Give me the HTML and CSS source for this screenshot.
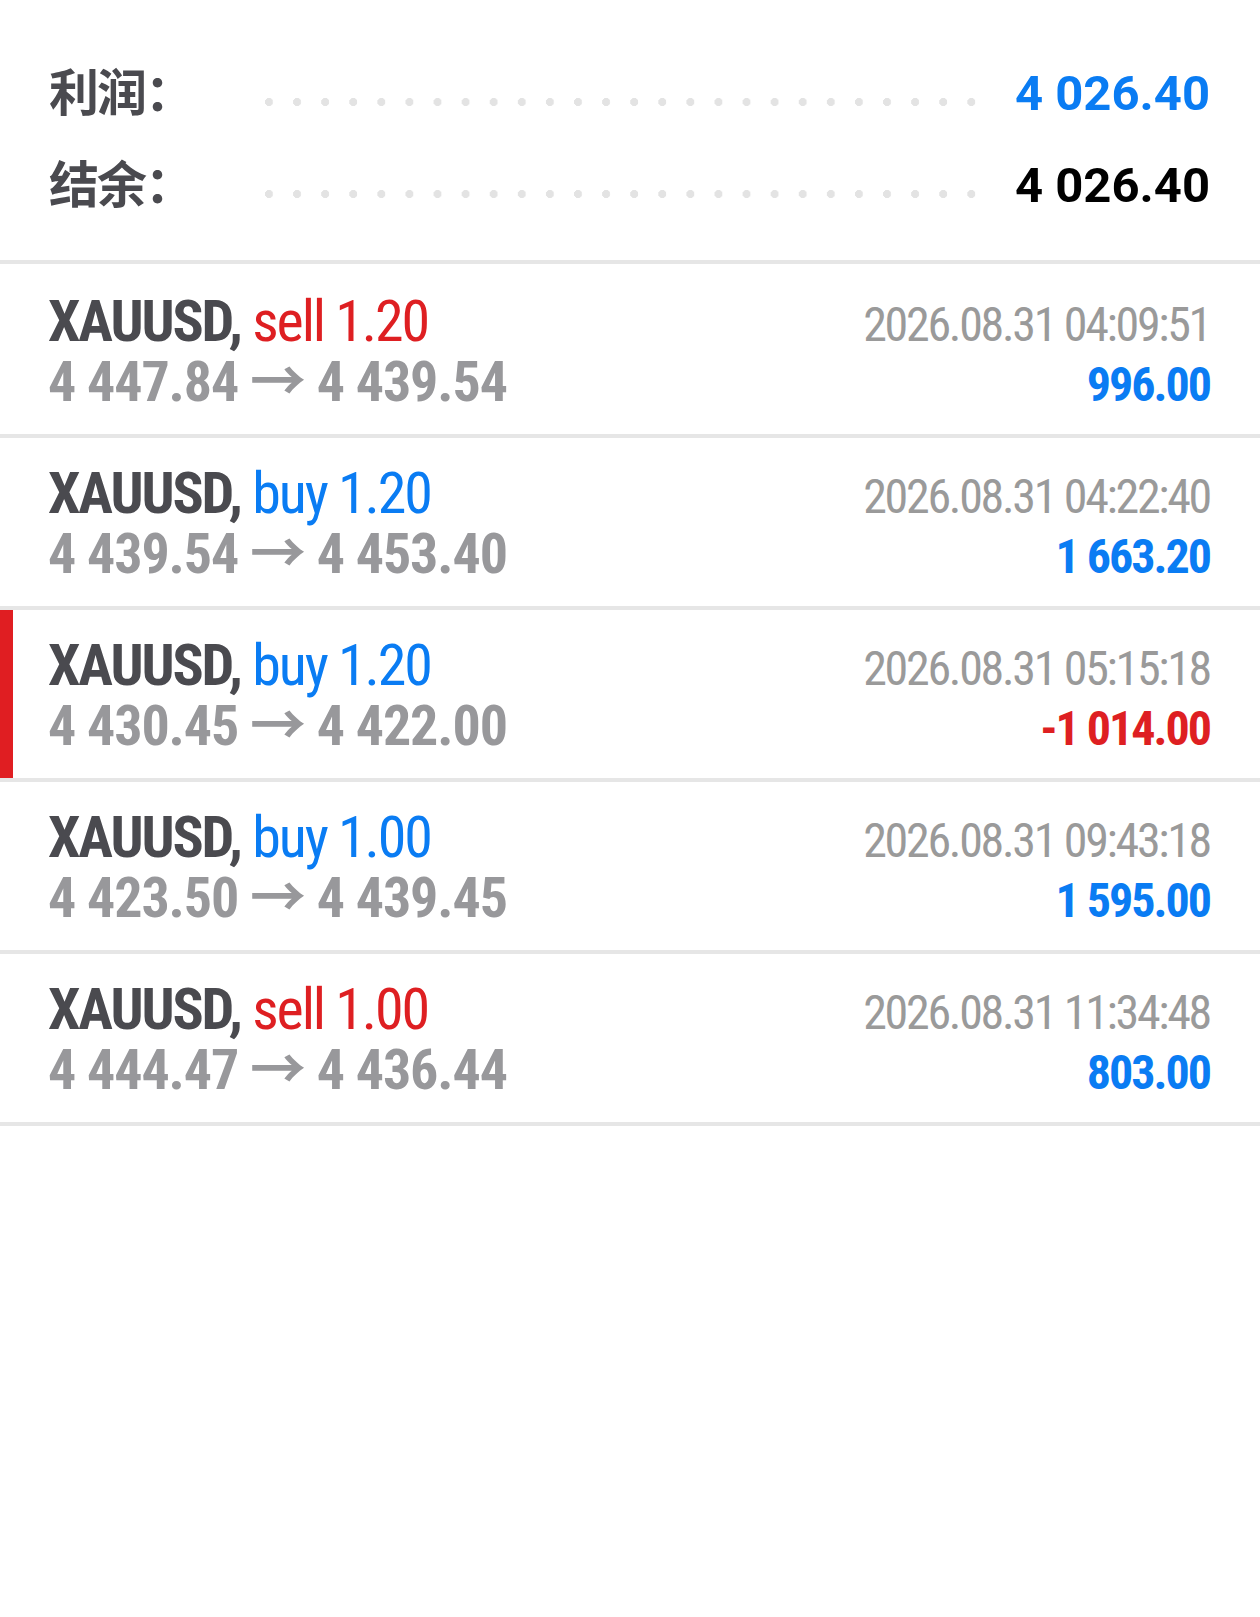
FILE: index.html
```html
<!DOCTYPE html>
<html lang="zh-CN">
<head>
  <meta charset="UTF-8" />
  <title>历史</title>
  <link rel="stylesheet" href="styles.css">
</head>
<body>

  <!-- Summary -->
  <section class="summary">
    <div class="summary-row">
      <span class="summary-label">利润：</span>
      <span class="leader"></span>
      <span class="summary-value blue">4 026.40</span>
    </div>
    <div class="summary-row">
      <span class="summary-label">结余：</span>
      <span class="leader"></span>
      <span class="summary-value">4 026.40</span>
    </div>
  </section>

  <!-- Deals -->
  <section class="trades">
    <div class="trade">
      <div class="symbol">XAUUSD, <span class="red">sell 1.20</span></div>
      <div class="time">2026.08.31 04:09:51</div>
      <div class="prices">4 447.84 → 4 439.54</div>
      <div class="profit blue">996.00</div>
    </div>
    <div class="trade">
      <div class="symbol">XAUUSD, <span class="blue">buy 1.20</span></div>
      <div class="time">2026.08.31 04:22:40</div>
      <div class="prices">4 439.54 → 4 453.40</div>
      <div class="profit blue">1 663.20</div>
    </div>
    <div class="trade selected">
      <div class="symbol">XAUUSD, <span class="blue">buy 1.20</span></div>
      <div class="time">2026.08.31 05:15:18</div>
      <div class="prices">4 430.45 → 4 422.00</div>
      <div class="profit red">-1 014.00</div>
    </div>
    <div class="trade">
      <div class="symbol">XAUUSD, <span class="blue">buy 1.00</span></div>
      <div class="time">2026.08.31 09:43:18</div>
      <div class="prices">4 423.50 → 4 439.45</div>
      <div class="profit blue">1 595.00</div>
    </div>
    <div class="trade">
      <div class="symbol">XAUUSD, <span class="red">sell 1.00</span></div>
      <div class="time">2026.08.31 11:34:48</div>
      <div class="prices">4 444.47 → 4 436.44</div>
      <div class="profit blue">803.00</div>
    </div>
  </section>

</body>
</html>
```

FILE: styles.css
```css
body {
  margin: 0;
  background: #fff;
  font-family: "Roboto Condensed", Roboto, "Noto Sans CJK SC", sans-serif;
  font-stretch: condensed;
  color: #4a4a4f;
}
.blue {
  color: #0a7cf3;
}
.red {
  color: #de1f22;
}

/* summary block */
.summary {
  padding: 47px 50px 29px 49px;
  border-bottom: 4px solid #e6e6e6;
}
.summary-row {
  display: flex;
  align-items: center;
  height: 92px;
}
.summary-label {
  font-family: "Noto Sans CJK SC", sans-serif;
  font-weight: 700;
  font-size: 50px;
  letter-spacing: -2px;
  color: #4a4a4f;
  width: 216px;
  margin-bottom: 8px;
}
.leader {
  width: 712px;
  height: 8px;
  margin-top: 18px;
  background-image: radial-gradient(circle at 4px 4px, #e3e3e3 3.8px, transparent 4.3px);
  background-size: 28.1px 8px;
  background-repeat: repeat-x;
}
.summary-value {
  margin-left: auto;
  font-family: Roboto, "Liberation Sans", sans-serif;
  font-stretch: normal;
  font-weight: 700;
  font-size: 49px;
  color: #000;
}
.summary-value.blue {
  color: #0a7cf3;
}

/* deal rows */
.trades {
  padding-top: 2px;
}
.trade {
  display: grid;
  grid-template-columns: 1fr auto;
  grid-template-rows: 61px 61px;
  align-items: baseline;
  line-height: 60px;
  height: 172px;
  box-sizing: border-box;
  padding: 25px 50px 0 48px;
  border-bottom: 4px solid #e6e6e6;
}
.trade.selected {
  box-shadow: inset 13px 0 0 #e01e22;
}
.symbol {
  font-size: 58px;
  font-weight: 700;
  letter-spacing: -2.1px;
  color: #4a4a4f;
}
.symbol span {
  font-weight: 400;
}
.prices {
  font-size: 56px;
  font-weight: 700;
  letter-spacing: -1.1px;
  color: #98989b;
}
.time {
  font-size: 48px;
  letter-spacing: -2.3px;
  color: #9a9a9a;
  text-align: right;
}
.profit {
  font-size: 48px;
  font-weight: 700;
  letter-spacing: -2px;
  text-align: right;
}
```
